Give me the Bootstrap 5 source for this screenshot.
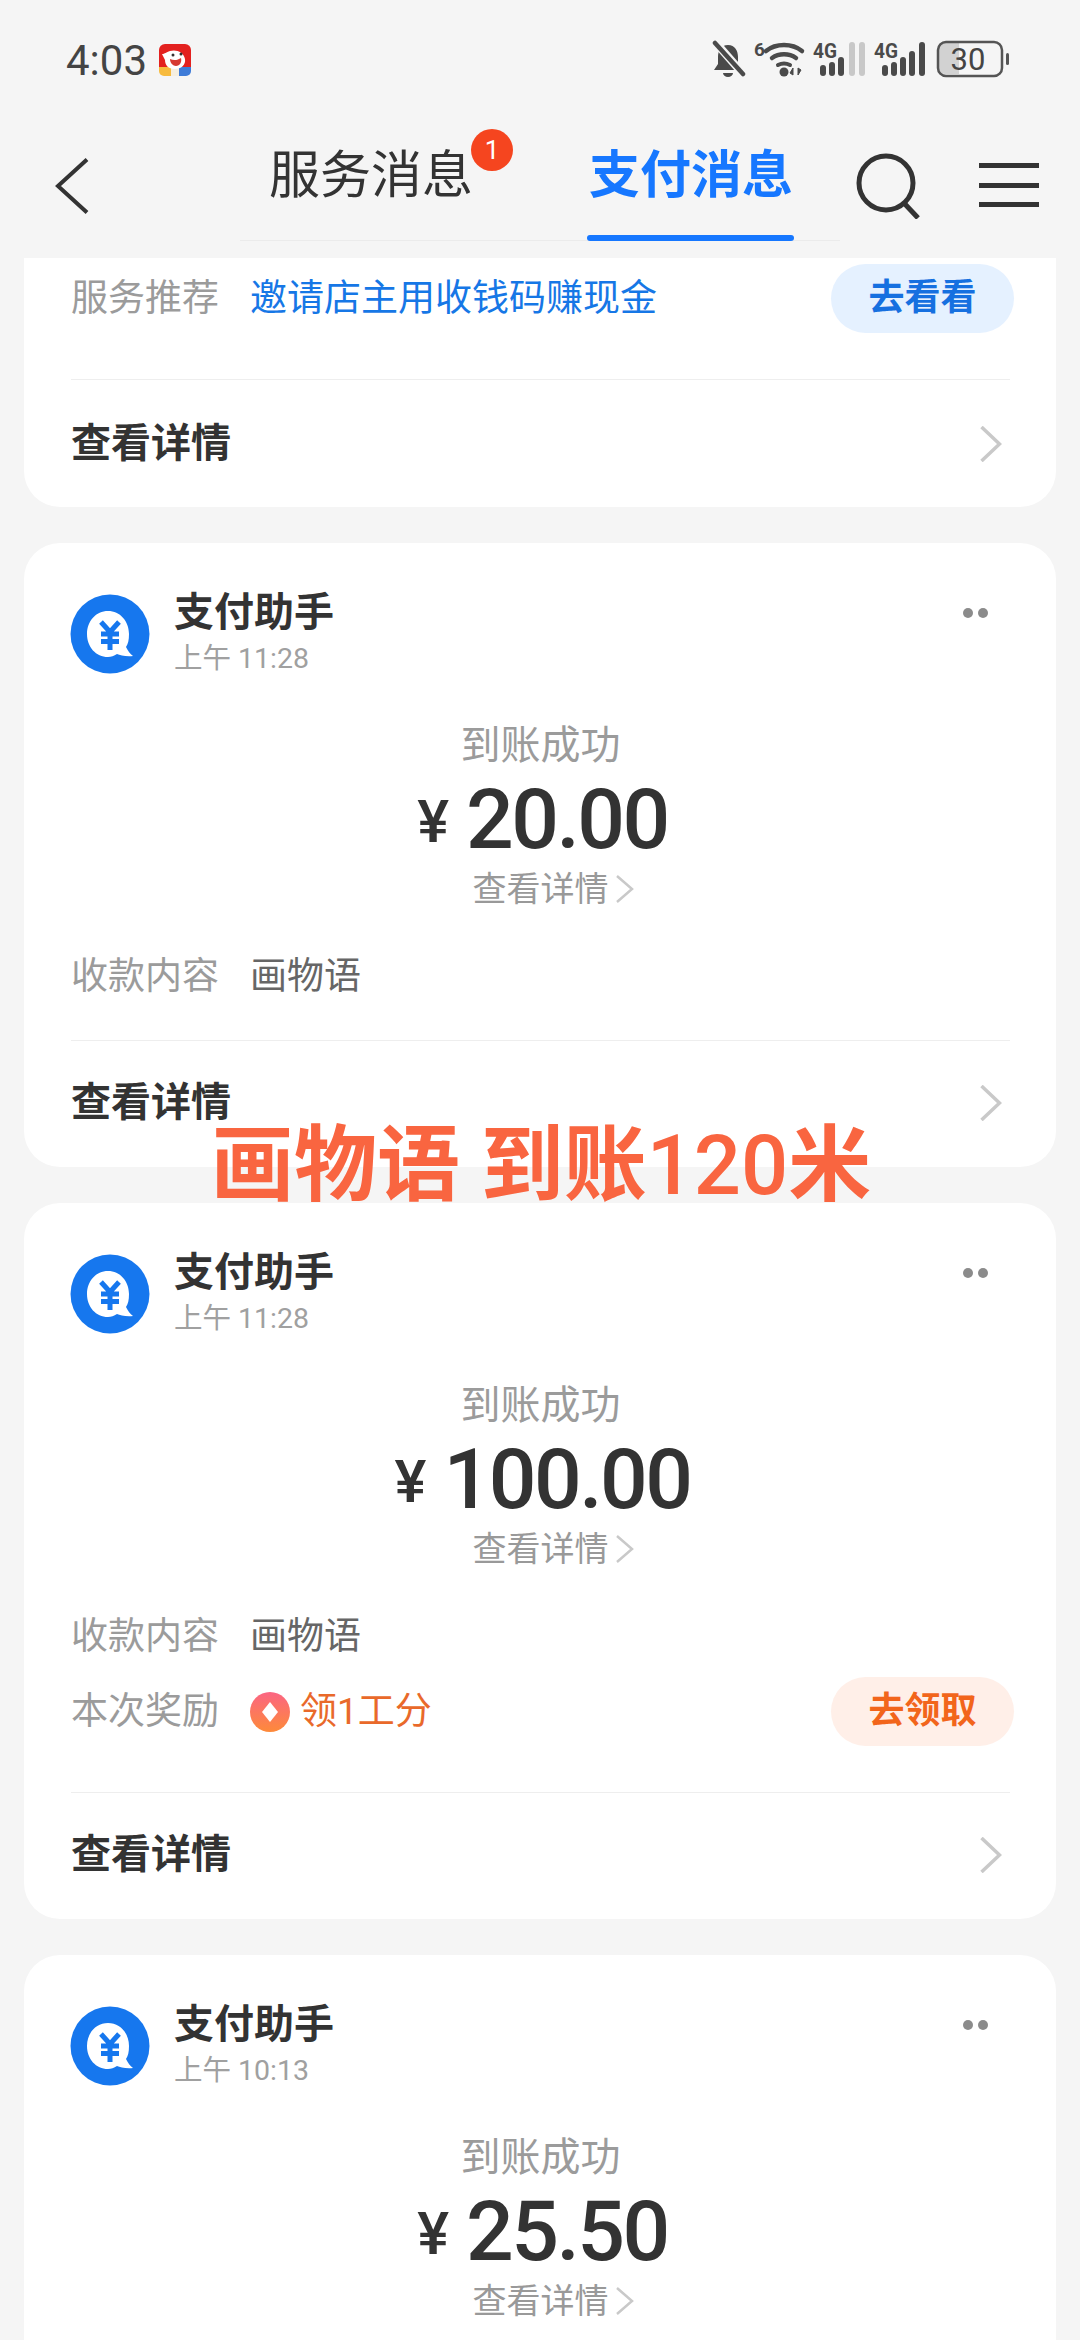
<!DOCTYPE html>
<html lang="zh-CN">
<head>
<meta charset="utf-8">
<link rel="stylesheet" href="https://cdn.jsdelivr.net/npm/bootstrap@5.3.0/dist/css/bootstrap.min.css">
<style>
html,body{margin:0;background:#f5f5f5;}
body{font-family:Roboto,"Noto Sans CJK SC","Noto Sans",sans-serif;color:#333;}
.screen{width:1080px;height:2340px;overflow:hidden;position:relative;background:#f5f5f5;}
.sbar{height:120px;padding:0 70px 0 66px;}
.clock{font-size:42px;line-height:1;color:#444;margin-top:2px;}
.appicon{margin-left:11px;width:34px;height:34px;}
.sicons{position:relative;width:302px;height:40px;}
.sicons svg{display:block;}
.nav-row{height:138px;}
.back-box{width:240px;padding:38px 0 0 55px;}
.tabs-box{width:600px;height:121px;border-bottom:1px solid #ebebeb;}
.tab-item{position:relative;font-size:51px;line-height:1;padding-top:30px;height:121px;white-space:nowrap;}
.tab-one{margin-left:29px;color:#333;}
.tab-two{margin-left:116px;color:#1677ff;font-weight:700;}
.tab-two::after{content:"";position:absolute;left:-2px;right:-1px;bottom:0;height:6px;border-radius:3px;background:#1677ff;}
.dotnum{position:absolute;left:202px;top:9px;width:42px;height:42px;border-radius:50%;background:#f5451f;color:#fff;font-size:26px;line-height:42px;text-align:center;}
.search-box{margin-left:15px;padding-top:33px;}
.menu-box{margin-left:58px;padding-top:43px;}
.msgcard{margin:0 24px 36px;width:1032px;border:0;border-radius:36px;background:#fff;padding:0 46px 0 47px;}
.first{border-radius:0 0 36px 36px;height:249px;}
.head-row{height:51px;margin-top:51px;position:relative;}
.logo{width:80px;height:80px;margin-left:-1px;flex:none;}
.who{margin-left:24px;}
.who-name{font-size:40px;line-height:1;font-weight:700;color:#333;margin-top:-1px;}
.who-time{font-size:28.500px;line-height:1;color:#a0a0a0;margin-top:12px;}
.moredots{position:absolute;right:22px;top:14px;display:flex;gap:5px;}
.moredots i{display:block;width:10px;height:10px;border-radius:50%;background:#8b8b8b;}
.mid{margin-top:81px;text-align:center;}
.mid-title{font-size:40px;line-height:1;color:#9b9b9b;}
.mid-amt{font-size:84px;letter-spacing:-2.500px;line-height:1;font-weight:500;color:#333;margin-top:14px;height:80px;padding-left:4px;}
.yen{font-size:60px;letter-spacing:0;line-height:1;margin-right:17px;font-weight:500;margin-top:4px;}
.mid-link{font-size:34px;line-height:1;color:#999;margin-top:12px;padding-left:26px;}
.mid-link svg{margin-left:6px;}
.info-row{font-size:37px;line-height:1;}
.lbl{color:#9b9b9b;width:179px;flex:none;}
.val{color:#666;}
.reco{color:#1677e6;}
.pillbtn{width:183px;height:69px;border-radius:35px;border:0;font-size:36px;font-weight:700;line-height:69px;padding:0;text-align:center;margin-right:-4px;}
.pill-blue{background:#e5f1ff;color:#1670e0;}
.pill-orange{background:#ffefe8;color:#f2651b;}
.rule{height:1px;background:#eeeeee;border:0;margin:0 0 0 -1px;opacity:1;}
.foot-row{font-size:40px;font-weight:700;color:#333;line-height:1;}
.reward{color:#e9692a;}
.reward svg{margin-right:10px;}
.stamp{position:absolute;left:211px;top:1124px;font-size:83px;line-height:1;font-weight:700;color:#f96540;white-space:nowrap;}
.stamp-num{font-weight:500;}
</style>
</head>
<body>
<div class="screen">
  <div class="sbar d-flex align-items-center justify-content-between">
    <div class="d-flex align-items-center">
      <span class="clock">4:03</span>
      <svg class="appicon" viewBox="0 0 34 34"><path d="M7 1h20a6 6 0 0 1 6 6v18H1V7a6 6 0 0 1 6-6z" fill="#e3211f"/><path d="M1 24h12v9H6a5 5 0 0 1-5-5z" fill="#f7bb3e"/><rect x="13" y="24" width="8" height="9" fill="#f6efe0"/><path d="M21 24h12v4a5 5 0 0 1-5 5h-7z" fill="#3d7bd8"/><path d="M4 11c3 0 4-2 8-3 6-2 14 1 15 8 1 6-4 10-10 10-7 0-10-4-10-9-1-2-2-4-3-6z" fill="#fff"/><path d="M12 16c4 2 8 1 11-1 1 4-1 8-5 8-3 0-6-3-6-7z" fill="#d63a32"/><circle cx="15" cy="12" r="1.500" fill="#333"/><circle cx="23" cy="11" r="1.500" fill="#333"/></svg>
    </div>
    <div class="sicons">
      <svg width="302" height="40" viewBox="0 0 302 40">
        <path d="M20 5c-7 0-10 6-10 12v7l-4 6h28l-4-6v-7c0-6-3-12-10-12z" fill="#4a4a4a"/>
        <path d="M15 33h10a5 4 0 0 1-10 0z" fill="#4a4a4a"/>
        <path d="M8 3l28 32" stroke="#f5f5f5" stroke-width="8"/>
        <path d="M7 3l28 31" stroke="#4a4a4a" stroke-width="4.5" stroke-linecap="round"/>
        <text x="46" y="16" font-family="Roboto" font-size="19" font-weight="700" fill="#4a4a4a">6</text>
        <path d="M58 11c10-8 26-8 36 0" fill="none" stroke="#4a4a4a" stroke-width="4.5" stroke-linecap="round"/>
        <path d="M64 18c7-5 17-5 24 0" fill="none" stroke="#4a4a4a" stroke-width="4.5" stroke-linecap="round"/>
        <path d="M70 25c4-2 8-2 12 0" fill="none" stroke="#4a4a4a" stroke-width="4" stroke-linecap="round"/>
        <circle cx="76" cy="32" r="4.5" fill="#4a4a4a"/>
        <path d="M85 35v-7l-3 5zM90 28v7l3-5z" fill="#4a4a4a" stroke="#4a4a4a" stroke-width="1"/>
        <text x="105" y="18" font-family="Roboto" font-size="21" font-weight="700" fill="#4a4a4a" textLength="24" lengthAdjust="spacingAndGlyphs">4G</text>
        <rect x="112" y="25" width="6" height="11" rx="3" fill="#4a4a4a"/>
        <rect x="121" y="22" width="6" height="14" rx="3" fill="#4a4a4a"/>
        <rect x="130" y="17" width="6" height="19" rx="3" fill="#4a4a4a"/>
        <rect x="141" y="2" width="6" height="34" rx="3" fill="#c8c8c8"/>
        <rect x="151" y="2" width="6" height="34" rx="3" fill="#c8c8c8"/>
        <text x="166" y="18" font-family="Roboto" font-size="21" font-weight="700" fill="#4a4a4a" textLength="24" lengthAdjust="spacingAndGlyphs">4G</text>
        <rect x="174" y="25" width="6" height="11" rx="3" fill="#4a4a4a"/>
        <rect x="183" y="22" width="6" height="14" rx="3" fill="#4a4a4a"/>
        <rect x="192" y="17" width="6" height="19" rx="3" fill="#4a4a4a"/>
        <rect x="201" y="11" width="6" height="25" rx="3" fill="#4a4a4a"/>
        <rect x="211" y="2" width="6" height="34" rx="3" fill="#4a4a4a"/>
        <path d="M237 3h14v31h-14a7 7 0 0 1-7-7v-17a7 7 0 0 1 7-7z" fill="#d2d2d2"/>
        <rect x="230" y="2" width="64" height="34" rx="8" fill="none" stroke="#555" stroke-width="2.5"/>
        <text x="260" y="30" text-anchor="middle" font-family="Roboto" font-size="31" fill="#444">30</text>
        <rect x="298" y="13" width="3" height="12" rx="1.5" fill="#555"/>
      </svg>
    </div>
  </div>

  <div class="nav-row d-flex align-items-start">
    <div class="back-box"><svg width="34" height="56" viewBox="0 0 34 56" class="d-block"><path d="M32 1.5L3 28l29 26.5" fill="none" stroke="#333" stroke-width="4"/></svg></div>
    <div class="tabs-box d-flex">
      <div class="tab-item tab-one">服务消息<span class="dotnum">1</span></div>
      <div class="tab-item tab-two">支付消息</div>
    </div>
    <div class="search-box"><svg width="66" height="66" viewBox="0 0 66 66" class="d-block"><ellipse cx="31" cy="30" rx="27" ry="27" fill="none" stroke="#333" stroke-width="5"/><path d="M49 50l14 15" stroke="#333" stroke-width="5"/></svg></div>
    <div class="menu-box d-flex flex-column">
      <svg width="60" height="46" viewBox="0 0 60 46" class="d-block"><path d="M0 2.5h60M0 22.5h60M0 41.5h60" stroke="#333" stroke-width="5"/></svg>
    </div>
  </div>

  <main>
    <section class="card msgcard first">
      <div class="info-row d-flex align-items-center justify-content-between" style="height:69px;margin-top:6px">
        <div class="d-flex"><span class="lbl">服务推荐</span><span class="reco">邀请店主用收钱码赚现金</span></div>
        <span class="pillbtn pill-blue">去看看</span>
      </div>
      <hr class="rule" style="margin-top:46px">
      <div class="foot-row d-flex align-items-center justify-content-between" style="height:127px">查看详情
        <svg width="22" height="36" viewBox="0 0 22 36" class="me-2"><path d="M1.500 1l18 17-18 17" fill="none" stroke="#c9c9c9" stroke-width="3.500"/></svg>
      </div>
    </section>

    <section class="card msgcard" style="height:624px">
      <div class="head-row d-flex">
        <svg class="logo" viewBox="0 0 80 80"><circle cx="40" cy="40" r="39.500" fill="#1677ee"/><path d="M38 17C50 17 59 27 59 40C59 46 58 50 56 53C58 57 60 60 63 62C56 63 50 61 47 60C44 62 41 63 38 63C26 63 17 53 17 40C17 27 26 17 38 17Z" fill="#fff"/><path d="M31 28l9 10 9-10M31 40h18M31 47.500h18M40 38v18" fill="none" stroke="#1677ee" stroke-width="5"/></svg>
        <div class="who"><div class="who-name">支付助手</div><div class="who-time">上午 11:28</div></div>
        <div class="moredots"><i></i><i></i></div>
      </div>
      <div class="mid">
        <div class="mid-title">到账成功</div>
        <div class="mid-amt d-flex justify-content-center align-items-center"><span class="yen">¥</span>20.00</div>
        <div class="mid-link d-flex justify-content-center align-items-center">查看详情<svg width="20" height="30" viewBox="0 0 20 30"><path d="M2 2l15 13L2 28" fill="none" stroke="#c9c9c9" stroke-width="2.500"/></svg></div>
      </div>
      <div class="info-row d-flex" style="margin-top:52px"><span class="lbl">收款内容</span><span class="val">画物语</span></div>
      <hr class="rule" style="margin-top:45px">
      <div class="foot-row d-flex align-items-center justify-content-between" style="height:124px">查看详情
        <svg width="22" height="36" viewBox="0 0 22 36" class="me-2"><path d="M1.500 1l18 17-18 17" fill="none" stroke="#c9c9c9" stroke-width="3.500"/></svg>
      </div>
    </section>

    <section class="card msgcard" style="height:716px">
      <div class="head-row d-flex">
        <svg class="logo" viewBox="0 0 80 80"><circle cx="40" cy="40" r="39.500" fill="#1677ee"/><path d="M38 17C50 17 59 27 59 40C59 46 58 50 56 53C58 57 60 60 63 62C56 63 50 61 47 60C44 62 41 63 38 63C26 63 17 53 17 40C17 27 26 17 38 17Z" fill="#fff"/><path d="M31 28l9 10 9-10M31 40h18M31 47.500h18M40 38v18" fill="none" stroke="#1677ee" stroke-width="5"/></svg>
        <div class="who"><div class="who-name">支付助手</div><div class="who-time">上午 11:28</div></div>
        <div class="moredots"><i></i><i></i></div>
      </div>
      <div class="mid">
        <div class="mid-title">到账成功</div>
        <div class="mid-amt d-flex justify-content-center align-items-center"><span class="yen">¥</span>100.00</div>
        <div class="mid-link d-flex justify-content-center align-items-center">查看详情<svg width="20" height="30" viewBox="0 0 20 30"><path d="M2 2l15 13L2 28" fill="none" stroke="#c9c9c9" stroke-width="2.500"/></svg></div>
      </div>
      <div class="info-row d-flex" style="margin-top:52px"><span class="lbl">收款内容</span><span class="val">画物语</span></div>
      <div class="info-row d-flex align-items-center justify-content-between" style="margin-top:22px;height:69px">
        <div class="d-flex align-items-center"><span class="lbl">本次奖励</span>
          <span class="reward d-flex align-items-center"><svg width="40" height="40" viewBox="0 0 40 40"><defs><linearGradient id="rg" x1="0" y1="0" x2="0" y2="1"><stop offset="0" stop-color="#fb6583"/><stop offset="1" stop-color="#fd8a3a"/></linearGradient></defs><circle cx="20" cy="20" r="20" fill="url(#rg)"/><path d="M20 10l8 10-8 10-8-10z" fill="#fff"/></svg>领1工分</span>
        </div>
        <span class="pillbtn pill-orange">去领取</span>
      </div>
      <hr class="rule" style="margin-top:46px">
      <div class="foot-row d-flex align-items-center justify-content-between" style="height:124px">查看详情
        <svg width="22" height="36" viewBox="0 0 22 36" class="me-2"><path d="M1.500 1l18 17-18 17" fill="none" stroke="#c9c9c9" stroke-width="3.500"/></svg>
      </div>
    </section>

    <section class="card msgcard" style="height:624px">
      <div class="head-row d-flex">
        <svg class="logo" viewBox="0 0 80 80"><circle cx="40" cy="40" r="39.500" fill="#1677ee"/><path d="M38 17C50 17 59 27 59 40C59 46 58 50 56 53C58 57 60 60 63 62C56 63 50 61 47 60C44 62 41 63 38 63C26 63 17 53 17 40C17 27 26 17 38 17Z" fill="#fff"/><path d="M31 28l9 10 9-10M31 40h18M31 47.500h18M40 38v18" fill="none" stroke="#1677ee" stroke-width="5"/></svg>
        <div class="who"><div class="who-name">支付助手</div><div class="who-time">上午 10:13</div></div>
        <div class="moredots"><i></i><i></i></div>
      </div>
      <div class="mid">
        <div class="mid-title">到账成功</div>
        <div class="mid-amt d-flex justify-content-center align-items-center"><span class="yen">¥</span>25.50</div>
        <div class="mid-link d-flex justify-content-center align-items-center">查看详情<svg width="20" height="30" viewBox="0 0 20 30"><path d="M2 2l15 13L2 28" fill="none" stroke="#c9c9c9" stroke-width="2.500"/></svg></div>
      </div>
    </section>
  </main>

  <div class="stamp">画物语 到账<span class="stamp-num">120</span>米</div>
</div>
<script src="https://cdn.jsdelivr.net/npm/bootstrap@5.3.0/dist/js/bootstrap.bundle.min.js"></script>
</body>
</html>
